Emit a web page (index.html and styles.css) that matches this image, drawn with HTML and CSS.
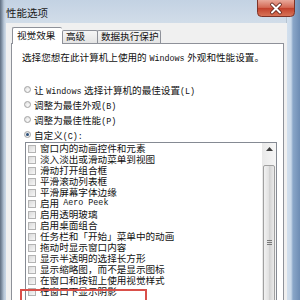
FILE: index.html
```html
<!DOCTYPE html>
<html lang="zh-CN">
<head>
<meta charset="utf-8">
<title>性能选项</title>
<link rel="stylesheet" href="styles.css">
</head>
<body>
<div class="window">
  <div class="titlebar">
    <span class="title">性能选项</span>
    <div class="close">
      <svg width="38" height="17" viewBox="0 0 38 17">
        <defs>
          <linearGradient id="cg" x1="0" y1="0" x2="0" y2="1">
            <stop offset="0" stop-color="#e9a99a"/>
            <stop offset="0.45" stop-color="#d46a55"/>
            <stop offset="0.5" stop-color="#c2412c"/>
            <stop offset="1" stop-color="#d9765a"/>
          </linearGradient>
        </defs>
        <path d="M0.5 0 V12.5 Q0.5 16.5 4.5 16.5 H33.5 Q37.5 16.5 37.5 12.5 V0" fill="url(#cg)" stroke="#7d3328" stroke-width="1"/>
        <path d="M15 4.5 L23 12.5 M23 4.5 L15 12.5" stroke="#5a2018" stroke-width="3.6" stroke-linecap="round"/>
        <path d="M15 4.5 L23 12.5 M23 4.5 L15 12.5" stroke="#ffffff" stroke-width="2" stroke-linecap="round"/>
      </svg>
    </div>
  </div>
  <div class="client">
    <div class="tabs">
      <div class="tab selected">视觉效果</div>
      <div class="tab t2">高级</div>
      <div class="tab t3">数据执行保护</div>
    </div>
    <div class="panel">
      <p class="intro">选择您想在此计算机上使用的 <span class="lat">Windows</span> 外观和性能设置。</p>
      <div class="radios">
        <div class="radio-row"><span class="radio"></span><span>让 <span class="lat">Windows</span> 选择计算机的最佳设置<span class="lat">(L)</span></span></div>
        <div class="radio-row"><span class="radio"></span><span>调整为最佳外观<span class="lat">(B)</span></span></div>
        <div class="radio-row"><span class="radio"></span><span>调整为最佳性能<span class="lat">(P)</span></span></div>
        <div class="radio-row"><span class="radio checked"></span><span>自定义<span class="lat">(C):</span></span></div>
      </div>
      <div class="listbox">
        <div class="items">
          <div class="item"><span class="check"></span>窗口内的动画控件和元素</div>
          <div class="item"><span class="check"></span>淡入淡出或滑动菜单到视图</div>
          <div class="item"><span class="check"></span>滑动打开组合框</div>
          <div class="item"><span class="check"></span>平滑滚动列表框</div>
          <div class="item"><span class="check"></span>平滑屏幕字体边缘</div>
          <div class="item"><span class="check"></span>启用 <span class="lat">Aero Peek</span></div>
          <div class="item"><span class="check"></span>启用透明玻璃</div>
          <div class="item"><span class="check"></span>启用桌面组合</div>
          <div class="item"><span class="check"></span>任务栏和「开始」菜单中的动画</div>
          <div class="item"><span class="check"></span>拖动时显示窗口内容</div>
          <div class="item"><span class="check"></span>显示半透明的选择长方形</div>
          <div class="item"><span class="check"></span>显示缩略图，而不是显示图标</div>
          <div class="item"><span class="check"></span>在窗口和按钮上使用视觉样式</div>
          <div class="item"><span class="check"></span>在窗口下显示阴影</div>
        </div>
        <div class="scrollbar">
          <div class="sb-up"><svg width="7" height="4" viewBox="0 0 7 4"><path d="M0 4 L3.5 0 L7 4 Z" fill="#3d3d3d"/></svg></div>
          <div class="sb-track"></div>
          <div class="sb-thumb"><span class="grip"></span></div>
        </div>
        <div class="highlight"></div>
      </div>
    </div>
  </div>
</div>
</body>
</html>
```
FILE: styles.css
```css
* {
  box-sizing: border-box;
  margin: 0;
  padding: 0;
}

html, body {
  width: 300px;
  height: 300px;
  overflow: hidden;
}

body {
  font-family: "Liberation Sans", "Noto Sans CJK SC", sans-serif;
  font-size: 9.6px;
  color: #111;
}

.window {
  width: 300px;
  height: 300px;
  display: flex;
  flex-direction: column;
  padding: 0 13px 0 6px;
  background:
    linear-gradient(90deg, #5f6e80 0, #8797aa 2px, #b9c8d8 4px, rgba(201,215,230,0) 6px, rgba(201,215,230,0) 286px, #9aa6b3 286px, #d3e0ee 287px, #cbdaea 291px, #8aa6c8 293px, #6d8cb4 300px),
    linear-gradient(180deg, #c3d2e3 0, #d2dde9 24px, #c7d6e7 300px);
}

.titlebar {
  height: 23px;
  flex: none;
  display: flex;
  justify-content: space-between;
  align-items: flex-start;
}

.title {
  font-size: 10.5px;
  line-height: 12px;
  margin-top: 7px;
  color: #1a1a1a;
}

.close {
  width: 38px;
  height: 17px;
  margin-right: -8px;
  display: flex;
}

.client {
  flex: 1;
  display: flex;
  flex-direction: column;
  background: #f0f0f0;
  padding: 4px 3px 0 5px;
}

.tabs {
  display: flex;
  align-items: flex-end;
  height: 17px;
  padding-left: 1px;
  margin-bottom: -1px;
  position: relative;
  z-index: 1;
}

.tab {
  height: 13px;
  margin-bottom: 1px;
  border: 1px solid #8e9199;
  border-bottom: none;
  border-radius: 2px 2px 0 0;
  background: linear-gradient(#f6f6f6, #e4e4e4);
  line-height: 11px;
  padding-left: 3px;
  white-space: nowrap;
}

.tab.selected {
  width: 50px;
  height: 17px;
  margin-bottom: 0;
  background: #fff;
  padding-left: 4px;
  line-height: 15px;
  border-right: none;
}

.tab.t2 {
  width: 36px;
}

.tab.t3 {
  width: 64px;
  margin-left: -1px;
}

.panel {
  flex: 1;
  background: #fff;
  border: 1px solid #8e9199;
  padding: 8px 6px 0 10px;
  display: flex;
  flex-direction: column;
}

.intro {
  line-height: 12px;
  margin-bottom: 17px;
  white-space: nowrap;
}

.lat {
  font-family: "Liberation Mono", monospace;
  font-size: 8.4px;
}

.radio-row {
  display: flex;
  align-items: center;
  gap: 3px;
  height: 15px;
  padding-left: 2px;
  white-space: nowrap;
}

.radio {
  width: 7px;
  height: 7px;
  border-radius: 50%;
  border: 1px solid #a3a3a3;
  background: radial-gradient(circle at 60% 65%, #fbfbfb 0, #e2e2e2 70%);
  display: flex;
  align-items: center;
  justify-content: center;
}

.radio.checked::after {
  content: "";
  width: 3px;
  height: 3px;
  border-radius: 50%;
  background: #2b4f7a;
}

.listbox {
  position: relative;
  margin: 0 0 0 3px;
  height: 180px;
  flex: none;
  border: 1px solid #858a93;
  display: flex;
}

.items {
  flex: 1;
  display: flex;
  flex-direction: column;
}

.item {
  height: 11px;
  line-height: 11px;
  display: flex;
  align-items: center;
  gap: 4px;
  padding-left: 2px;
  white-space: nowrap;
}

.check {
  width: 8px;
  height: 8px;
  border: 1px solid #b3b3b3;
  background: linear-gradient(135deg, #dadada, #f7f7f7);
  flex: none;
}

.scrollbar {
  width: 14px;
  display: flex;
  flex-direction: column;
  background: linear-gradient(90deg, #e9e9e9, #f6f6f6);
}

.sb-up {
  height: 13px;
  display: flex;
  align-items: center;
  justify-content: center;
}

.sb-track {
  height: 11px;
}

.sb-thumb {
  height: 172px;
  margin: 0 1px;
  border: 1px solid #a0a0a0;
  border-radius: 2px;
  background: linear-gradient(90deg, #f2f2f2, #e2e2e2 45%, #d3d3d3 55%, #ebebeb);
  display: flex;
  align-items: center;
  justify-content: center;
}

.grip {
  width: 5px;
  height: 5px;
  border-top: 1px solid #7a7a7a;
  border-bottom: 1px solid #7a7a7a;
  background: linear-gradient(#7a7a7a, #7a7a7a) center / 5px 1px no-repeat;
}

.highlight {
  position: absolute;
  top: 146px;
  left: -6px;
  width: 127px;
  height: 20px;
  border: 2px solid #d9504a;
}
```
